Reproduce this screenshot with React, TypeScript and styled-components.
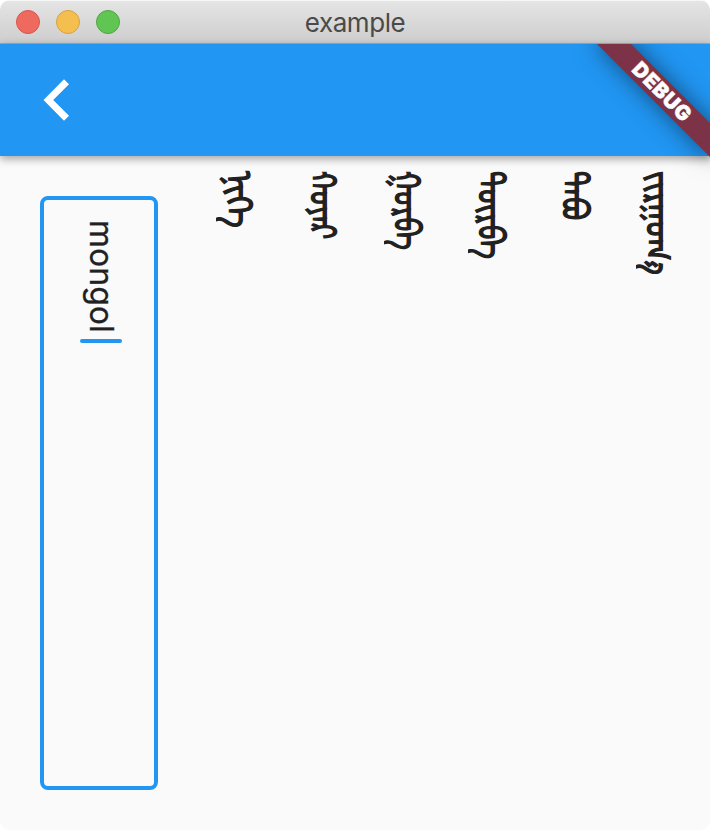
import React from "react";
import styled, { createGlobalStyle } from "styled-components";

const GlobalStyle = createGlobalStyle`
  *, *::before, *::after { box-sizing: border-box; }
  body { margin: 0; background: #fff; }
`;

const Window = styled.main`
  width: 710px;
  height: 830px;
  display: flex;
  flex-direction: column;
  overflow: hidden;
  border-radius: 10px;
  background: #fafafa;
  color: #212121;
  font-family: Inter, sans-serif;
`;

const TitleBar = styled.header`
  flex: none;
  height: 44px;
  display: grid;
  grid-template-columns: 1fr auto 1fr;
  align-items: center;
  padding: 0 16px;
  background: linear-gradient(#e7e7e7, #e3e3e3 5%, #cecece);
  border-top: 1px solid #f5f5f5;
  border-bottom: 1px solid #acacac;
`;

const Lights = styled.div`
  display: flex;
  gap: 16px;
`;

const Light = styled.span<{ $fill: string; $edge: string }>`
  width: 24px;
  height: 24px;
  border-radius: 50%;
  background: ${(p) => p.$fill};
  border: 1px solid ${(p) => p.$edge};
`;

const Title = styled.h1`
  margin: 0;
  padding-top: 2px;
  font: 400 26px/36px Inter, sans-serif;
  letter-spacing: -0.45px;
  color: #4a4a4a;
`;

const AppBar = styled.nav`
  position: relative;
  flex: none;
  height: 112px;
  display: flex;
  align-items: center;
  padding-left: 43px;
  background: #2196f3;
  box-shadow: 0 4px 8px rgba(0, 0, 0, 0.22), 0 1px 8px rgba(0, 0, 0, 0.16);
`;

const BackButton = styled.button`
  display: flex;
  padding: 0;
  border: 0;
  background: none;
`;

const BannerClip = styled.div`
  position: absolute;
  top: 0;
  right: 0;
  width: 180px;
  height: 180px;
  overflow: hidden;
  pointer-events: none;
`;

const Banner = styled.div`
  position: absolute;
  top: 36px;
  left: 52px;
  width: 160px;
  height: 24px;
  transform: rotate(45deg);
  background: #7d3347;
  box-shadow: 0 0 24px rgba(0, 0, 0, 0.5);
  color: #fff;
  text-align: center;
  font: 900 20.4px/24px Inter, sans-serif;
  letter-spacing: 0.7px;
  -webkit-text-stroke: 0.5px #fff;
`;

const Content = styled.section`
  flex: 1;
  display: flex;
  align-items: flex-start;
  padding: 40px 0 0 40px;
`;

const Field = styled.div`
  width: 118px;
  height: 594px;
  flex: none;
  display: flex;
  flex-direction: column;
  align-items: center;
  gap: 7px;
  padding-top: 20px;
  border: 4px solid #2196f3;
  border-radius: 8px;
`;

const FieldText = styled.span`
  writing-mode: vertical-rl;
  height: 112px;
  white-space: nowrap;
  font-size: 32px;
  line-height: 42px;
  margin-left: 4px;
  -webkit-text-stroke: 0.3px #212121;
`;

const Caret = styled.span`
  width: 42px;
  height: 4px;
  margin-left: 4px;
  border-radius: 2px;
  background: #2196f3;
`;

const Suggestions = styled.ul`
  list-style: none;
  display: flex;
  margin: -25px 0 0 69px;
  padding: 0;
`;

const Suggestion = styled.li<{ $stretch: number }>`
  width: 84px;
  flex: none;
  writing-mode: vertical-lr;
  white-space: nowrap;
  font: 400 32px/42px "Noto Sans Mongolian", "Mongolian Baiti", "Noto Sans", sans-serif;
  -webkit-text-stroke: 1.3px #212121;
  transform: scale(1.14, ${(p) => p.$stretch});
  transform-origin: 21px 0;
`;

const words = [
  { text: "ᠨᠢᠭᠡ", stretch: 0.97 },
  { text: "ᠬᠣᠶᠠᠷ", stretch: 0.85 },
  { text: "ᠭᠤᠷᠪᠠ", stretch: 0.865 },
  { text: "ᠳᠥᠷᠪᠡ", stretch: 0.91 },
  { text: "ᠲᠠᠪᠤ", stretch: 0.9 },
  { text: "ᠵᠢᠷᠭᠤᠭ᠎ᠠ", stretch: 0.95 },
];

export default function App() {
  return (
    <>
      <GlobalStyle />
      <Window>
        <TitleBar>
          <Lights>
            <Light $fill="#ee6a5f" $edge="#d6564c" />
            <Light $fill="#f5bf4f" $edge="#d8a040" />
            <Light $fill="#61c554" $edge="#50a73f" />
          </Lights>
          <Title>example</Title>
        </TitleBar>
        <AppBar>
          <BackButton aria-label="Back">
            <svg width="27" height="42" viewBox="0 0 27 42">
              <path d="M26 5.2 21 0.3.5 21 21 41.7l5-4.9L10.2 21z" fill="#fff" />
            </svg>
          </BackButton>
          <BannerClip>
            <Banner>DEBUG</Banner>
          </BannerClip>
        </AppBar>
        <Content>
          <Field>
            <FieldText>mongol</FieldText>
            <Caret />
          </Field>
          <Suggestions lang="mn-Mong">
            {words.map((word) => (
              <Suggestion key={word.text} $stretch={word.stretch}>
                {word.text}
              </Suggestion>
            ))}
          </Suggestions>
        </Content>
      </Window>
    </>
  );
}
